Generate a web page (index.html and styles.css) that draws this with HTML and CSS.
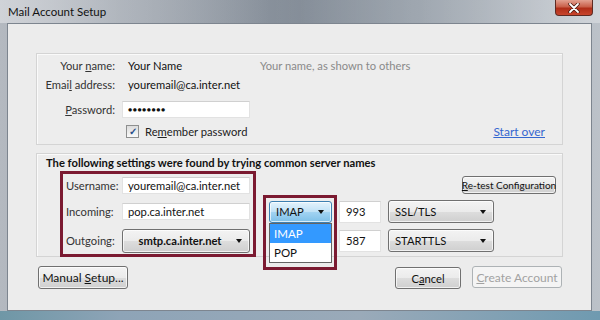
FILE: index.html
```html
<!DOCTYPE html>
<html lang="en">
<head>
  <meta charset="UTF-8" />
  <title>Mail Account Setup</title>
  <link rel="stylesheet" href="styles.css">
</head>
<body>
  <div class="window">
    <div class="titlebar">
      <span class="title">Mail Account Setup</span>
      <span class="close">
        <svg width="14" height="10" viewBox="0 0 14 10">
          <path d="M3 1 L11 9 M11 1 L3 9" stroke="#4a1a12" stroke-width="3.4" stroke-linecap="round"/>
          <path d="M3 1 L11 9 M11 1 L3 9" stroke="#fff" stroke-width="1.8" stroke-linecap="round"/>
        </svg>
      </span>
    </div>

    <div class="client">
      <div class="group identity">
        <span class="lbl">Your <u>n</u>ame:</span>
        <span class="val">Your Name</span>
        <span class="hint">Your name, as shown to others</span>

        <span class="lbl">Emai<u>l</u> address:</span>
        <span class="val">youremail@ca.inter.net</span>
        <span></span>

        <span class="lbl"><u>P</u>assword:</span>
        <span class="field dots">&#9679;&#9679;&#9679;&#9679;&#9679;&#9679;&#9679;&#9679;</span>
        <span></span>

        <span></span>
        <span class="check"><span class="box">&#10003;</span><span>Re<u>m</u>ember password</span></span>
        <a class="link" href="#">Start over</a>
      </div>

      <div class="group found">
        <div class="found-head">The following settings were found by trying common server names</div>
        <div class="found-body">
          <div class="mark servers">
            <span class="slbl">Username:</span>
            <span class="field">youremail@ca.inter.net</span>
            <span class="slbl">Incoming:</span>
            <span class="field">pop.ca.inter.net</span>
            <span class="slbl">Outgoing:</span>
            <span class="select bold"><span>smtp.ca.inter.net</span><i class="arrow"></i></span>
          </div>
          <div class="opts">
            <span class="btn small retest"><span><u>R</u>e-test Configuration</span></span>
            <div class="proto">
              <span class="select open"><span>IMAP</span><i class="arrow"></i></span>
              <div class="mark proto-mark"></div>
              <div class="list">
                <div class="item on">IMAP</div>
                <div class="item">POP</div>
              </div>
            </div>
            <span class="field port">993</span>
            <span class="select sec"><span>SSL/TLS</span><i class="arrow"></i></span>
            <span class="field port p3">587</span>
            <span class="select sec p3"><span>STARTTLS</span><i class="arrow"></i></span>
          </div>
        </div>
      </div>

      <div class="actions">
        <span class="btn manual"><span>Manual <u>S</u>etup...</span></span>
        <span class="spacer"></span>
        <span class="btn cancel"><span>C<u>a</u>ncel</span></span>
        <span class="btn disabled create"><span><u>C</u>reate Account</span></span>
      </div>
    </div>
  </div>
</body>
</html>
```

FILE: styles.css
```css
body {
  margin: 0;
  background: #fff;
  font-family: 'Lato', 'Open Sans', sans-serif;
  font-size: 11.2px;
  color: #222;
}
u { text-decoration: underline; text-underline-offset: 1px; }

.window {
  width: 600px;
  height: 320px;
  box-sizing: border-box;
  padding: 0 8px 9px 7px;
  background: linear-gradient(90deg, #b4b9c0 0%, #9ba2ab 25%, #838c97 50%, #949da7 70%, #bcc2c9 100%);
  display: flex;
  flex-direction: column;
  position: relative;
}
.window::after {
  content: "";
  position: absolute;
  left: 0; right: 0; bottom: 0;
  height: 9px;
  background: linear-gradient(90deg, #6f97a6, #8ea4b7 20%, #9aaab9 60%, #6f9ab0);
}
.titlebar {
  height: 23px;
  display: flex;
  align-items: center;
  justify-content: space-between;
  margin-left: -7px;
  margin-right: -8px;
  padding-left: 8px;
  background: linear-gradient(90deg, rgba(220,222,226,.7) 0%, rgba(200,204,210,.4) 20%, rgba(0,0,0,0) 45%, rgba(255,255,255,.15) 80%, rgba(255,255,255,.3) 100%);
}
.title {
  font-size: 11.5px;
  color: #111;
  margin-top: -1px;
}
.close {
  align-self: flex-start;
  width: 38px;
  height: 16px;
  margin-right: 7px;
  box-sizing: border-box;
  border: 1px solid #5e2a22;
  border-top: 0;
  border-radius: 0 0 4px 4px;
  background: linear-gradient(#e3a191, #c9604a 45%, #b02e18 55%, #c8452d);
  display: flex;
  align-items: center;
  justify-content: center;
}

.client {
  flex: 1;
  background: #ececec;
  border: 1px solid #7d858f;
  display: flex;
  flex-direction: column;
  padding: 29px 28px 0 28px;
  position: relative;
  z-index: 1;
}

.group {
  border: 1px solid #d4d4d4;
  box-shadow: inset 1px 1px 0 #fafafa;
  background: #ededed;
}
.identity {
  height: 92px;
  box-sizing: border-box;
  padding: 2px 17px 0 0;
  display: grid;
  grid-template-columns: 78px 128px 1fr;
  grid-template-rows: 19px 19px 25px 22px;
  column-gap: 7px;
  align-items: end;
}
.lbl {
  text-align: right;
  line-height: 19px;
  color: #333;
  white-space: nowrap;
}
.val {
  padding-left: 6px;
  line-height: 19px;
  color: #111;
  white-space: nowrap;
}
.hint {
  padding-left: 3px;
  line-height: 19px;
  color: #8a8a8a;
  white-space: nowrap;
}
.field {
  height: 17px;
  box-sizing: border-box;
  background: #fff;
  border: 1px solid #e2e2e2;
  border-top-color: #d0d0d0;
  padding-left: 5px;
  line-height: 15px;
  color: #111;
  white-space: nowrap;
  overflow: hidden;
}
.identity .field { margin-bottom: 1px; }
.dots {
  font-size: 7px;
  letter-spacing: 0.5px;
  line-height: 15px;
}
.check {
  display: flex;
  align-items: center;
  height: 19px;
  padding-left: 4px;
  color: #222;
  white-space: nowrap;
}
.box {
  width: 11px;
  height: 11px;
  border: 1px solid #8e8f8f;
  background: linear-gradient(#dcdcdc, #fafafa);
  margin-right: 6px;
  font-size: 10px;
  line-height: 11px;
  text-align: center;
  color: #2a4f8a;
  font-weight: bold;
}
.link {
  justify-self: end;
  line-height: 19px;
  color: #3567d0;
  text-decoration: underline;
  font-size: 12px;
}

.found {
  margin-top: 8px;
  height: 104px;
  box-sizing: border-box;
  padding: 1px 0 0 23px;
}
.found-head {
  height: 16px;
  line-height: 16px;
  margin-left: -14px;
  font-weight: bold;
  color: #111;
  white-space: nowrap;
}
.found-body {
  display: grid;
  grid-template-columns: 196px 1fr;
}
.mark {
  border: 3px solid #7b1a31;
}
.servers {
  height: 86px;
  box-sizing: border-box;
  padding: 2px 3px 2px 2px;
  display: grid;
  grid-template-columns: 57px 128px;
  grid-template-rows: 18px 22px 23px;
  row-gap: 6.5px;
  align-items: center;
}
.slbl { color: #333; padding-left: 1px; }
.servers .field { height: 17px; }

.opts {
  padding: 5px 6px 0 13px;
  display: grid;
  grid-template-columns: 63px 42px 106px 1fr;
  grid-template-rows: 18px 22px 23px;
  column-gap: 7px;
  row-gap: 6.5px;
  align-items: center;
}
.retest {
  grid-column: 3 / 5;
  grid-row: 1;
  justify-self: end;
  width: 94px;
}
.proto { grid-column: 1; grid-row: 2; position: relative; height: 22px; }
.port { grid-column: 2; grid-row: 2; }
.sec { grid-column: 3; grid-row: 2; }
.p3 { grid-row: 3; }
.opts .field { height: 22px; line-height: 20px; padding-left: 6px; }

.btn, .select {
  box-sizing: border-box;
  border: 1px solid #707070;
  border-radius: 3px;
  background: linear-gradient(#f3f3f3, #ebebeb 50%, #dddddd 51%, #cfcfcf);
  box-shadow: inset 0 0 0 1px rgba(255,255,255,.7);
  color: #111;
  white-space: nowrap;
}
.btn {
  display: flex;
  align-items: center;
  justify-content: center;
  height: 23px;
}
.btn.small {
  height: 18px;
  font-size: 10px;
}
.select {
  display: flex;
  align-items: center;
  height: 22px;
  padding: 0 7px 0 6px;
  position: relative;
}
.select.bold {
  height: 24px;
  font-weight: bold;
  justify-content: center;
  padding-right: 18px;
}
.select.sec { height: 23px; }
.arrow {
  position: absolute;
  right: 7px;
  top: 50%;
  margin-top: -2px;
  border-left: 3.5px solid transparent;
  border-right: 3.5px solid transparent;
  border-top: 4px solid #111;
}
.select.open {
  border-color: #3c7fb1;
  background: linear-gradient(#e4f3fc, #bfe1f6 50%, #a2d3f2 51%, #7ec0e8);
}
.proto-mark {
  position: absolute;
  left: -6px;
  top: -6px;
  width: 74px;
  height: 75px;
  box-sizing: border-box;
}
.list {
  position: absolute;
  left: 0;
  top: 22px;
  width: 63px;
  height: 40px;
  box-sizing: border-box;
  border: 1px solid #646464;
  background: #fff;
  z-index: 2;
}
.item {
  height: 19px;
  line-height: 19px;
  padding-left: 4px;
  font-size: 11.5px;
  color: #111;
}
.item.on {
  background: #3399ff;
  color: #fff;
}

.actions {
  display: flex;
  margin: 9px 1px 0 2px;
  gap: 11px;
}
.spacer { flex: 1; }
.manual { width: 90px; font-size: 12px; }
.cancel { width: 66px; height: 22px; margin-top: 1px; }
.create { width: 90px; height: 22px; font-size: 12px; }
.btn.disabled {
  border-color: #adb2b5;
  background: #f4f4f4;
  box-shadow: none;
  color: #a2a2a2;
}
```
